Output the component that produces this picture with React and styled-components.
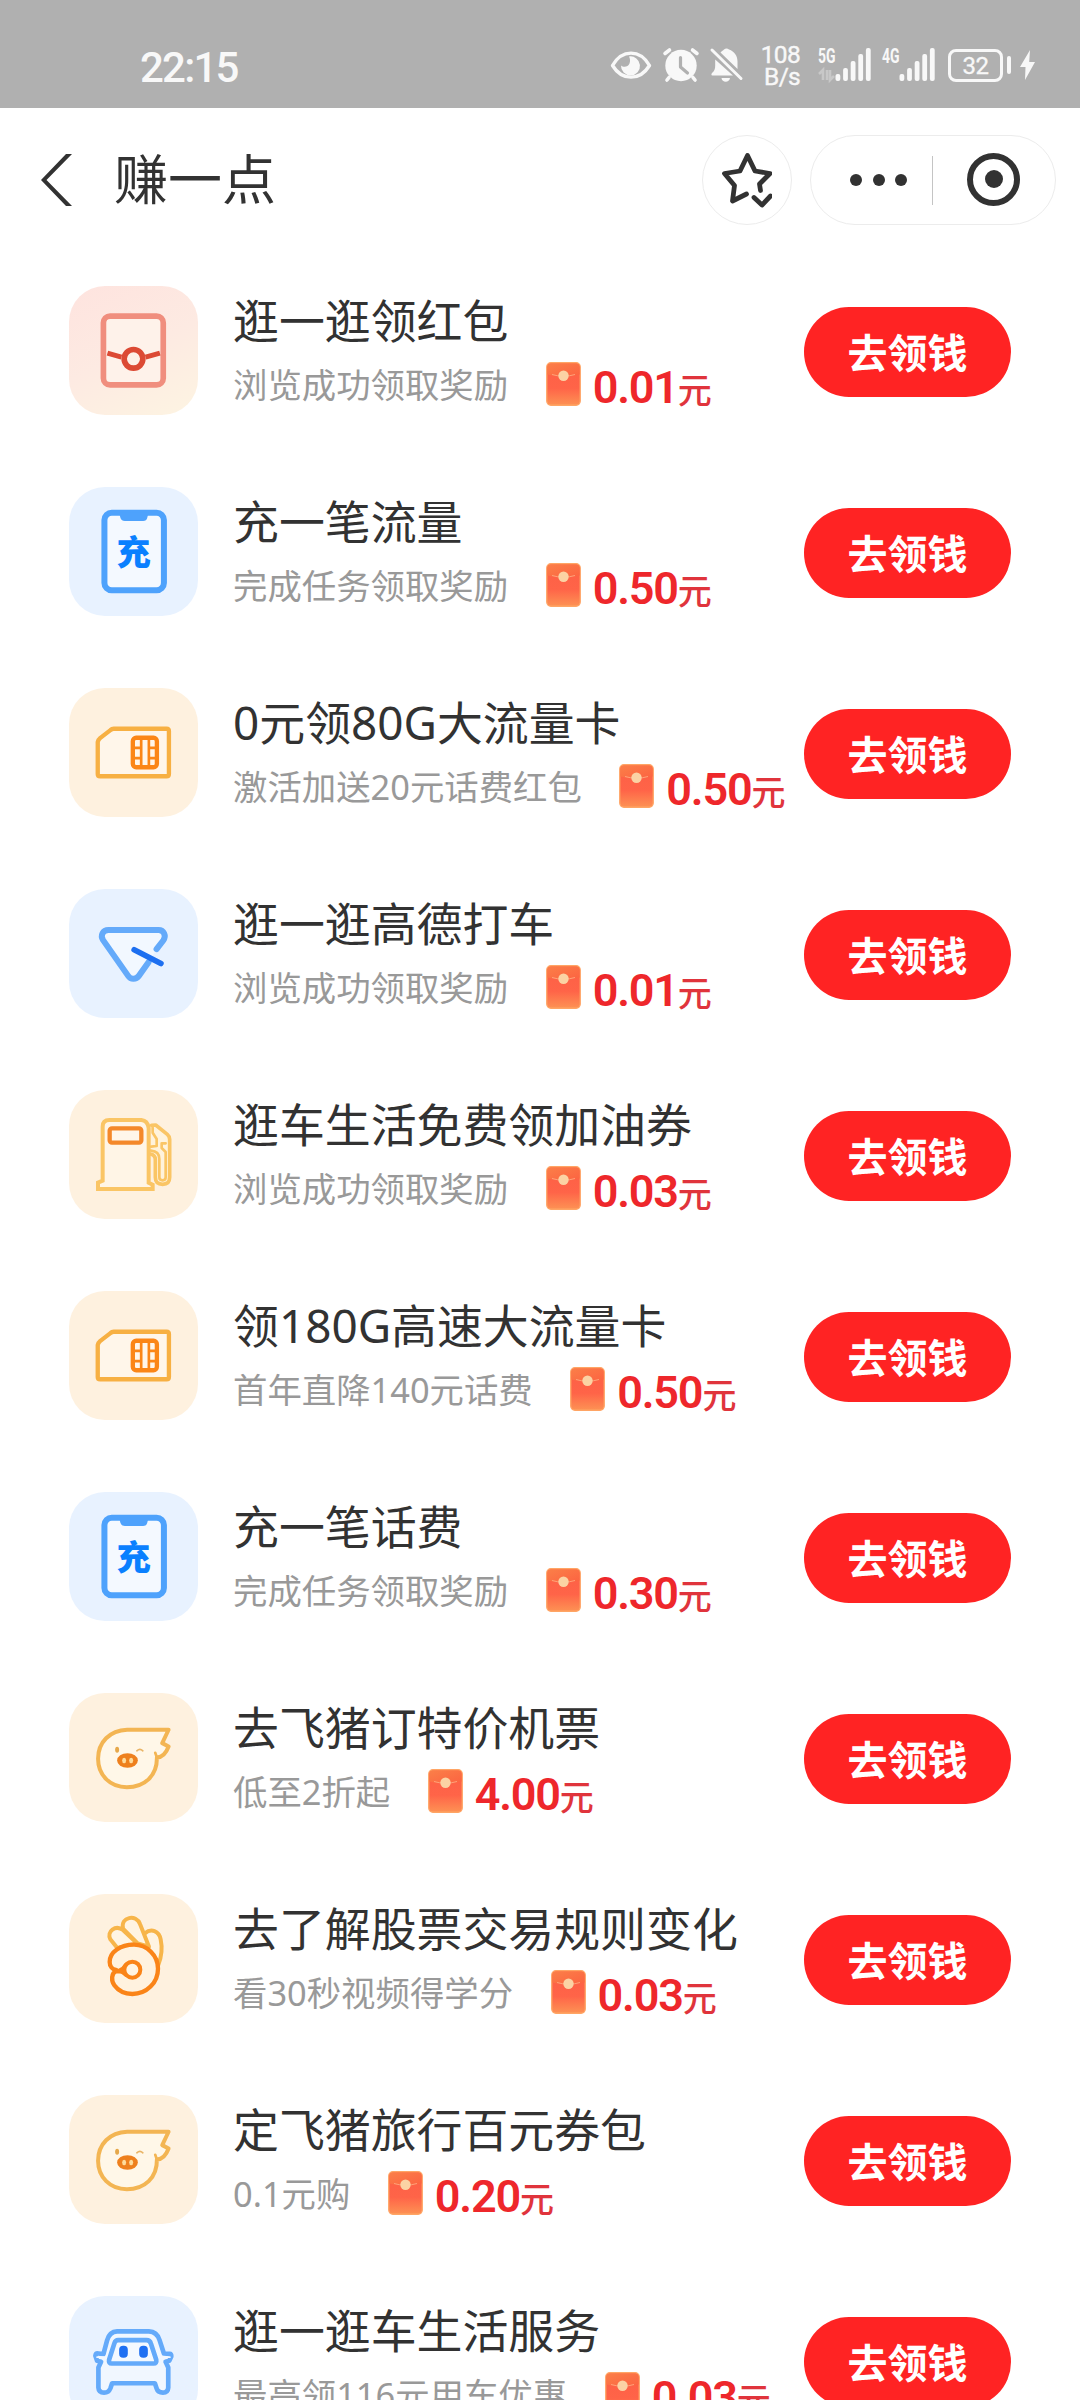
import React from "react";
import styled, { createGlobalStyle } from "styled-components";

const GlobalStyle = createGlobalStyle`
  * { box-sizing: border-box; }
  html, body { margin: 0; padding: 0; background: #fff; }
  body { overflow: hidden; }
`;

const Screen = styled.div`
  width: 1080px;
  height: 2400px;
  overflow: hidden;
  background: #fff;
  color: #323232;
  font-family: "Noto Sans", "Noto Sans CJK SC", sans-serif;
`;

/* ---------- status bar ---------- */

const StatusBar = styled.div`
  height: 108px;
  padding: 22px 45px 0 140px;
  background: #b0b0b0;
  color: #f8f8f8;
  display: flex;
  align-items: center;
  justify-content: space-between;
  font-family: Roboto, sans-serif;
`;

const Clock = styled.span`
  font-size: 42px;
  line-height: 50px;
  font-weight: 500;
  letter-spacing: -1.8px;
  padding-top: 5px;
`;

const StatusIcons = styled.div`
  display: flex;
  align-items: center;
  height: 50px;
`;

const StatusSvg = styled.svg`
  display: block;
  flex: none;
  overflow: visible;
  margin-right: ${(p) => p.$after || 0}px;
`;

const NetSpeed = styled.div`
  width: 41px;
  margin-right: 18px;
  padding-top: 1px;
  display: flex;
  flex-direction: column;
  align-items: flex-end;
  font-size: 24.5px;
  line-height: 22px;
  letter-spacing: -0.7px;
  -webkit-text-stroke: 0.4px #f8f8f8;
`;

const Battery = styled.div`
  width: 55px;
  height: 33px;
  border: 3px solid #f8f8f8;
  border-radius: 8px;
  display: flex;
  align-items: center;
  justify-content: center;
  font-size: 24px;
  line-height: 24px;
  padding-top: 2px;
  margin-right: 4px;
  letter-spacing: -0.6px;
  -webkit-text-stroke: 0.3px #f8f8f8;
`;

const BatteryTip = styled.div`
  width: 4px;
  height: 18px;
  border-radius: 2px;
  background: #f8f8f8;
  margin-right: 9px;
`;

/* ---------- navigation bar ---------- */

const NavBar = styled.div`
  height: 142px;
  padding: 2px 24px 0 40px;
  display: flex;
  align-items: center;
`;

const NavTitle = styled.h1`
  margin: -2px auto 0 42px;
  font-size: 54px;
  line-height: 72px;
  font-weight: 400;
`;

const RoundButton = styled.div`
  width: 90px;
  height: 90px;
  border: 1px solid #ececec;
  border-radius: 45px;
  display: flex;
  align-items: center;
  justify-content: center;
  margin-right: 18px;
`;

const Capsule = styled.div`
  width: 246px;
  height: 90px;
  border: 1px solid #ececec;
  border-radius: 45px;
  display: flex;
  align-items: center;
`;

const Dots = styled.div`
  display: flex;
  gap: 10.5px;
  margin-left: 39px;
`;

const Dot = styled.i`
  width: 12px;
  height: 12px;
  border-radius: 50%;
  background: #323232;
`;

const Divider = styled.div`
  width: 1px;
  height: 49px;
  background: #c4c4c4;
  margin: 0 34px 0 25px;
`;

const Ring = styled.div`
  width: 53px;
  height: 53px;
  margin-top: -2px;
  border: 6px solid #323232;
  border-radius: 50%;
  display: flex;
  align-items: center;
  justify-content: center;
  &::after {
    content: "";
    width: 18px;
    height: 18px;
    border-radius: 50%;
    background: #323232;
  }
`;

/* ---------- task list ---------- */

const Row = styled.div`
  height: 201px;
  padding: 0 69px;
  display: flex;
  align-items: center;
`;

const tileBackground = {
  pink: "linear-gradient(155deg, #fee4df 5%, #fdeae2 50%, #fdf3e2 95%)",
  blue: "#e8f2ff",
  cream: "#fef1df",
};

const Tile = styled.div`
  width: 129px;
  height: 129px;
  flex: none;
  border-radius: 36px;
  background: ${(p) => tileBackground[p.$tone]};
  overflow: hidden;
`;

const TileSvg = styled.svg`
  display: block;
  width: 129px;
  height: 129px;
  fill: none;
  stroke-linejoin: round;
  stroke-linecap: round;
`;

const TileText = styled.text`
  font-family: "Noto Sans CJK SC", sans-serif;
  font-weight: 900;
  font-size: 102px;
  fill: #0a80ff;
  text-anchor: middle;
`;

const Info = styled.div`
  flex: 1;
  min-width: 0;
  padding-left: 35px;
  white-space: nowrap;
`;

const Title = styled.div`
  font-size: 45.9px;
  line-height: 67px;
  height: 69px;
`;

const SubLine = styled.div`
  height: 59px;
  display: flex;
  align-items: center;
`;

const Subtitle = styled.span`
  font-size: 34.4px;
  line-height: 59px;
  color: #999;
  margin-top: -1px;
`;

const EnvelopeSvg = styled.svg`
  display: block;
  flex: none;
  width: 35px;
  height: 44px;
  margin: -3px 12px 0 37.5px;
`;

const Amount = styled.span`
  font-family: Roboto, sans-serif;
  font-size: 45px;
  line-height: 59px;
  font-weight: 600;
  letter-spacing: -1.2px;
  color: #ee272b;
  padding-top: 6px;
`;

const Unit = styled.span`
  font-family: "Noto Sans CJK SC", sans-serif;
  font-size: 34px;
  font-weight: 500;
  letter-spacing: 0;
  color: #e0343c;
`;

const ClaimButton = styled.button`
  width: 207px;
  height: 90px;
  flex: none;
  margin: 3px 0 0;
  padding: 0 0 2px;
  border: 0;
  border-radius: 45px;
  background: #ff2323;
  color: #fff;
  font-family: "Noto Sans CJK SC", sans-serif;
  font-size: 40px;
  line-height: 88px;
  font-weight: 700;
`;

/* ---------- icons ---------- */

const EyeIcon = () => (
  <StatusSvg width="42" height="30" viewBox="0 0 42 30" $after={11}>
    <path d="M2.500 15.500C12-1 30-1 39.500 15.500 30 31 12 31 2.500 15.500Z" fill="none" stroke="#f8f8f8" strokeWidth="3.400" strokeLinejoin="round" />
    <path d="M19 6.500a9.500 9.500 0 1 1-8 9c2 2 7 2 8.500-2 1-3 .5-5-.5-7Z" fill="#f8f8f8" />
  </StatusSvg>
);

const AlarmIcon = () => (
  <StatusSvg width="36" height="34" viewBox="0 0 36 34" $after={11}>
    <circle cx="18" cy="17.500" r="15.700" fill="#f8f8f8" />
    <path d="M2 5.500 6.500 2M34 5.500 29.500 2M6 29.500 4 32M30 29.500 32 32" stroke="#f8f8f8" strokeWidth="3.600" strokeLinecap="round" />
    <path d="M17.500 9.500V19L24.500 25" fill="none" stroke="#b0b0b0" strokeWidth="3.200" strokeLinecap="round" strokeLinejoin="round" />
  </StatusSvg>
);

const BellOffIcon = () => (
  <StatusSvg width="33" height="34" viewBox="0 0 33 34" $after={16}>
    <path d="M10.500 4.500C12 3 13 2.500 14 1.500c1.500-1.500 3.500-1.500 5 0 5.500 2 8.500 6.500 8.500 12v7.500ZM5.200 11.500 23 27.500H2.500c-1.500 0-1.500-2 0-3 2-1.500 2.700-4 2.700-7ZM11.500 30H20c-.6 5-8 5-8.500 0Z" fill="#f8f8f8" />
    <path d="M2 2 31 30.500" stroke="#f8f8f8" strokeWidth="3" strokeLinecap="round" />
  </StatusSvg>
);

const SignalText = styled.text`
  font-family: Roboto, sans-serif;
  font-size: 20px;
  font-weight: 700;
  fill: #f8f8f8;
`;

const Signal = ({ label, after, data }) => (
  <StatusSvg width="53" height="34" viewBox="0 0 53 34" $after={after}>
    <SignalText x="0" y="15" textLength="17.500" lengthAdjust="spacingAndGlyphs">{label}</SignalText>
    {[7, 13, 20, 27, 33].map((h, i) => (
      <rect key={h} x={17.5 + i * 7.6} y={33 - h} width="4.800" height={h} rx="2" fill="#f8f8f8" />
    ))}
    {data && (
      <path d="M5 32V22L1 26M9 22V32M12 22V32L16 28" fill="none" stroke="#c8c8c8" strokeWidth="2.600" />
    )}
  </StatusSvg>
);

const BoltIcon = () => (
  <StatusSvg width="15" height="30" viewBox="0 0 15 30">
    <path d="M10 0 0 17h5.500L5 30 15 12H9.200Z" fill="#f8f8f8" />
  </StatusSvg>
);

const BackIcon = () => (
  <svg width="32" height="52" viewBox="0 0 32 52">
    <path d="M32 0H26L1 26 26 52h6L6.500 26Z" fill="#323232" />
  </svg>
);

const StarIcon = () => (
  <svg width="50" height="56" viewBox="0 0 50 56" fill="none" stroke="#323232" strokeWidth="4.800" strokeLinecap="round" strokeLinejoin="round">
    <path d="M24.500 42 10.500 49 12.500 33.500 2.500 21.500 18 19 25.500 3.500 33 19 48 21.500 37.500 32 38.500 38.500" />
    <path d="M32 45.500 40 53 48.500 44" />
  </svg>
);

const Envelope = () => (
  <EnvelopeSvg viewBox="0 0 35 44">
    <defs>
      <linearGradient id="env-body" x1="0" y1="0" x2="0" y2="1">
        <stop offset="0" stopColor="#fd6440" />
        <stop offset="0.350" stopColor="#fe6247" />
        <stop offset="0.600" stopColor="#ff6448" />
        <stop offset="1" stopColor="#fd9254" />
      </linearGradient>
      <linearGradient id="env-flap" x1="0" y1="0" x2="1" y2="1">
        <stop offset="0" stopColor="#fb7f48" />
        <stop offset="1" stopColor="#fc6341" />
      </linearGradient>
    </defs>
    <rect x="0.750" y="0.750" width="33.500" height="42.500" rx="4.200" fill="url(#env-body)" stroke="#ffa565" strokeWidth="1.300" />
    <path d="M1.400 5a3.500 3.500 0 0 1 3.500-3.500h25.200A3.500 3.500 0 0 1 33.600 5v7.500q-16 4-32.200 0Z" fill="url(#env-flap)" />
    <path d="M6 12.500q11.500 3.500 23 0" fill="none" stroke="#ffa27a" strokeWidth="1" />
    <circle cx="17.500" cy="13.800" r="5.200" fill="#fbd3a4" />
  </EnvelopeSvg>
);

const RedPacketIcon = () => (
  <TileSvg viewBox="88 78 386 386">
    <rect x="191" y="168" width="179" height="206" rx="20" fill="#fef2ea" stroke="#f08e7e" strokeWidth="17" />
    <path d="M203 279 245 291M317 291 360 279" stroke="#dc4a34" strokeWidth="15" strokeLinecap="butt" />
    <circle cx="281" cy="296" r="28" stroke="#dc4a34" strokeWidth="17" fill="#fdf1e8" />
  </TileSvg>
);

const RechargeIcon = () => (
  <TileSvg viewBox="88 681 386 386">
    <rect x="194" y="758" width="178" height="232" rx="22" fill="#f4f9ff" stroke="#4ea2fc" strokeWidth="18" />
    <path d="M238 758H326L322 774Q320 783 310 783H255Q245 783 242 774Z" fill="#4ea2fc" />
    <TileText x="281" y="914">充</TileText>
  </TileSvg>
);

const SimIcon = () => (
  <TileSvg viewBox="88 54 386 386">
    <path d="M222 176H380Q387 176 387 183V311Q387 318 380 318H181Q174 318 174 311V216Q175 209 181 204L212 180Q216 176 222 176Z" fill="#fff6ea" stroke="#f7b043" strokeWidth="13" />
    <rect x="279" y="203" width="72" height="88" rx="10" fill="#fff6ea" stroke="#fb8617" strokeWidth="13" />
    <path d="M304 202V292M327 202V292M278 233H304M278 264H304M327 233H352M327 264H352" stroke="#fb8617" strokeWidth="8" />
  </TileSvg>
);

const NavigateIcon = () => (
  <TileSvg viewBox="88 657 386 386">
    <path d="M350 837 370 811C380 797 372 780 356 780H206C189 780 181 796 190 810L265 917C273 929 289 928 297 917L326 876" fill="#f2f8ff" stroke="#64aafa" strokeWidth="18" />
    <path d="M283 839 363 880" stroke="#1d6ff0" strokeWidth="17" />
  </TileSvg>
);

const PumpIcon = () => (
  <TileSvg viewBox="0 0 387 387">
    <path d="M248 106 260 105 295 133Q302 139 302 148V262Q302 283 281 283Q259 283 259 262V208Q258 194 244 192" fill="#fff3dc" stroke="#fac565" strokeWidth="11" />
    <path d="M251 113V128L263 147V168L246 170M246 182Q271 184 271 207V262Q271 271 281 271Q290 271 290 262V186L278 174V160H290" stroke="#fac565" strokeWidth="8" />
    <path d="M101 272V110Q101 90 121 90H217Q236 92 239 114V278L251 284V297H87V278Z" fill="#fff5e6" stroke="#fac565" strokeWidth="12" strokeLinejoin="miter" />
    <rect x="122" y="115" width="95" height="43" rx="7" fill="#fff6ea" stroke="#f4882a" strokeWidth="13" />
  </TileSvg>
);

const PigIcon = () => (
  <TileSvg viewBox="88 69 386 386">
    <path d="M262 179H386L367 219 386 229C379 248 368 261 351 262C352 316 315 351 261 351C211 351 175 315 175 266C175 216 210 181 262 179Z" fill="#fff7e8" stroke="#f3b553" strokeWidth="12" />
    <path d="M351 262 346 248" stroke="#f3b553" strokeWidth="8" />
    <ellipse cx="263" cy="271" rx="31" ry="22" fill="#ee801d" />
    <ellipse cx="253" cy="271" rx="6" ry="8" fill="#fedc9c" />
    <ellipse cx="274" cy="271" rx="6" ry="8" fill="#fedc9c" />
    <ellipse cx="232" cy="239" rx="6" ry="9" fill="#e6a84a" />
    <path d="M291 242Q300 234 309 242" stroke="#e9b465" strokeWidth="5" />
  </TileSvg>
);

const HandIcon = () => (
  <TileSvg viewBox="0 0 387 387">
    <g fill="#fff4e2" stroke="#f7b54a" strokeWidth="12">
      <path d="M228 118C246 102 270 110 275 136C281 164 276 192 268 212L236 164" />
      <path d="M162 104C154 68 202 60 213 90L240 158 206 148Z" />
      <path d="M204 148 162 108C140 92 112 112 124 136L145 162Z" />
    </g>
    <path d="M150 232H141C127 237 126 260 136 274C149 292 168 300 190 300C233 300 267 266 267 224C267 184 234 152 195 152C155 152 122 174 122 204C122 217 130 226 141 228" fill="#fff2df" stroke="#fa8418" strokeWidth="13" />
    <path d="M139 230H150Q162 227 169 214M150 231Q162 233 170 242" stroke="#fa8418" strokeWidth="12" />
    <circle cx="190" cy="227" r="24" fill="#fff4e2" stroke="#fa8418" strokeWidth="12" />
  </TileSvg>
);

const CarIcon = () => (
  <TileSvg viewBox="88 648 386 386">
    <path d="M191 822 202 781Q209 755 232 754H327Q351 755 359 780L372 820 388 821Q395 820 394 829L388 842 377 845 385 862V922Q384 937 369 937Q354 937 350 924L345 909H217L212 924Q207 937 193 937Q177 937 176 922V862L184 845 172 842 167 827Q168 819 176 820Z" fill="#f1f7ff" stroke="#64aafa" strokeWidth="14" />
    <path d="M172 831H192M370 831H390" stroke="#f1f7ff" strokeWidth="5" />
    <path d="M235 780H320Q330 780 333 790L349 839Q351 850 341 850H216Q206 850 208 839L224 789Q227 780 235 780Z" fill="#f4f9ff" stroke="#64aafa" strokeWidth="14" />
    <rect x="238" y="797" width="26" height="36" rx="12" fill="#1f70f2" />
    <rect x="298" y="797" width="26" height="36" rx="12" fill="#1f70f2" />
  </TileSvg>
);

const tasks = [
  { icon: RedPacketIcon, tone: "pink", title: "逛一逛领红包", sub: "浏览成功领取奖励", amount: "0.01" },
  { icon: RechargeIcon, tone: "blue", title: "充一笔流量", sub: "完成任务领取奖励", amount: "0.50" },
  { icon: SimIcon, tone: "cream", title: "0元领80G大流量卡", sub: "激活加送20元话费红包", amount: "0.50" },
  { icon: NavigateIcon, tone: "blue", title: "逛一逛高德打车", sub: "浏览成功领取奖励", amount: "0.01" },
  { icon: PumpIcon, tone: "cream", title: "逛车生活免费领加油券", sub: "浏览成功领取奖励", amount: "0.03" },
  { icon: SimIcon, tone: "cream", title: "领180G高速大流量卡", sub: "首年直降140元话费", amount: "0.50" },
  { icon: RechargeIcon, tone: "blue", title: "充一笔话费", sub: "完成任务领取奖励", amount: "0.30" },
  { icon: PigIcon, tone: "cream", title: "去飞猪订特价机票", sub: "低至2折起", amount: "4.00" },
  { icon: HandIcon, tone: "cream", title: "去了解股票交易规则变化", sub: "看30秒视频得学分", amount: "0.03" },
  { icon: PigIcon, tone: "cream", title: "定飞猪旅行百元券包", sub: "0.1元购", amount: "0.20" },
  { icon: CarIcon, tone: "blue", title: "逛一逛车生活服务", sub: "最高领116元用车优惠", amount: "0.03" },
];

const TaskRow = ({ icon: Icon, tone, title, sub, amount }) => (
  <Row>
    <Tile $tone={tone}>
      <Icon />
    </Tile>
    <Info>
      <Title>{title}</Title>
      <SubLine>
        <Subtitle>{sub}</Subtitle>
        <Envelope />
        <Amount>
          {amount}
          <Unit>元</Unit>
        </Amount>
      </SubLine>
    </Info>
    <ClaimButton>去领钱</ClaimButton>
  </Row>
);

export default function App() {
  return (
    <Screen>
      <GlobalStyle />
      <StatusBar>
        <Clock>22:15</Clock>
        <StatusIcons>
          <EyeIcon />
          <AlarmIcon />
          <BellOffIcon />
          <NetSpeed>
            <span>108</span>
            <span>B/s</span>
          </NetSpeed>
          <Signal label="5G" after={11} data />
          <Signal label="4G" after={13} />
          <Battery>32</Battery>
          <BatteryTip />
          <BoltIcon />
        </StatusIcons>
      </StatusBar>
      <NavBar>
        <BackIcon />
        <NavTitle>赚一点</NavTitle>
        <RoundButton>
          <StarIcon />
        </RoundButton>
        <Capsule>
          <Dots>
            <Dot />
            <Dot />
            <Dot />
          </Dots>
          <Divider />
          <Ring />
        </Capsule>
      </NavBar>
      {tasks.map((task) => (
        <TaskRow key={task.title} {...task} />
      ))}
    </Screen>
  );
}
